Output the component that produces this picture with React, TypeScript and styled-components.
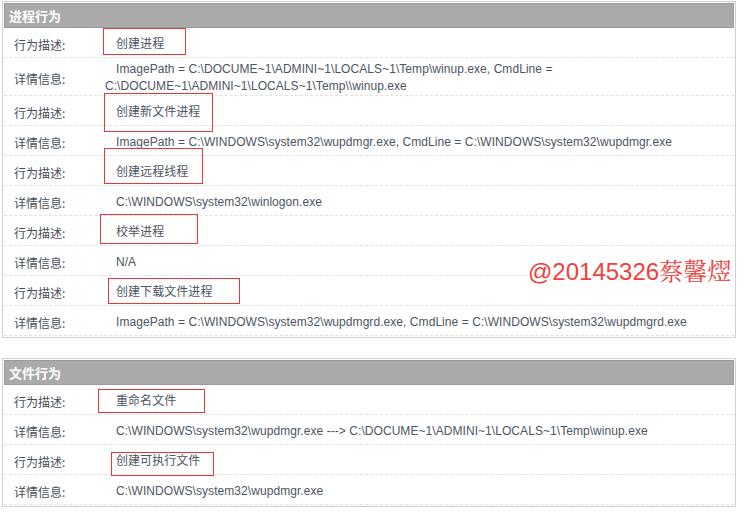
import React from 'react'
import styled, { createGlobalStyle } from 'styled-components'

const GlobalStyle = createGlobalStyle`
    body {
        margin: 0;
        background: #ffffff;
        font-family: "Liberation Sans", Arial, "Noto Sans CJK SC", sans-serif;
        font-size: 12px;
    }
`;

const Page = styled.div`
    position: relative;
    width: 750px;
    height: 518px;
    padding: 1px 0 0 2px;
    box-sizing: border-box;
    display: flex;
    flex-direction: column;
    gap: 20px;
`;

const Panel = styled.section`
    width: 734px;
    box-sizing: border-box;
    border: 1px solid #d0d0d0;
    padding: 1px;
`;

const PanelHeader = styled.h3`
    margin: 0;
    height: 25px;
    box-sizing: border-box;
    border: 1px solid #9a9a9a;
    background: #aaaaaa;
    color: #ffffff;
    font-size: 13px;
    font-weight: bold;
    line-height: 23px;
    padding-left: 4px;
    font-family: "Noto Sans CJK SC", sans-serif;
`;

const Row = styled.div`
    display: grid;
    grid-template-columns: 101px 1fr;
    align-items: center;
    min-height: 30px;
    box-sizing: border-box;
    padding: 3px 0 0;
    border-bottom: 1px dashed #e2e2e2;
    color: #4c5562;
    line-height: 17px;
`;

const Label = styled.div`
    padding-left: 10px;
    font-family: "Noto Sans CJK SC", sans-serif;
    color: #464e58;
`;

const Value = styled.div`
    text-indent: 11px;
    padding-right: 8px;
    letter-spacing: 0.06px;
    font-family: "Liberation Sans", Arial, "Noto Sans CJK SC", sans-serif;
`;

const Annotation = styled.div<{ $x: number; $y: number; $w: number; $h: number }>`
    position: absolute;
    left: ${p => p.$x}px;
    top: ${p => p.$y}px;
    width: ${p => p.$w}px;
    height: ${p => p.$h}px;
    border: 1px solid #e53a3a;
    box-sizing: border-box;
    pointer-events: none;
`;

const Watermark = styled.div`
    position: absolute;
    left: 528px;
    top: 254px;
    color: #f0413c;
    font-size: 24px;
    line-height: 32px;
    white-space: nowrap;
    font-family: "Liberation Sans", Arial, sans-serif;
`;

const SerifName = styled.span`
    font-family: "Noto Serif CJK SC", "Liberation Serif", "Noto Sans CJK SC", serif;
`;

type Entry = { label: string; value: string }

const processRows: Entry[] = [
    { label: '行为描述:', value: '创建进程' },
    { label: '详情信息:', value: 'ImagePath = C:\\DOCUME~1\\ADMINI~1\\LOCALS~1\\Temp\\winup.exe, CmdLine = C:\\DOCUME~1\\ADMINI~1\\LOCALS~1\\Temp\\\\winup.exe' },
    { label: '行为描述:', value: '创建新文件进程' },
    { label: '详情信息:', value: 'ImagePath = C:\\WINDOWS\\system32\\wupdmgr.exe, CmdLine = C:\\WINDOWS\\system32\\wupdmgr.exe' },
    { label: '行为描述:', value: '创建远程线程' },
    { label: '详情信息:', value: 'C:\\WINDOWS\\system32\\winlogon.exe' },
    { label: '行为描述:', value: '校举进程' },
    { label: '详情信息:', value: 'N/A' },
    { label: '行为描述:', value: '创建下载文件进程' },
    { label: '详情信息:', value: 'ImagePath = C:\\WINDOWS\\system32\\wupdmgrd.exe, CmdLine = C:\\WINDOWS\\system32\\wupdmgrd.exe' },
]

const fileRows: Entry[] = [
    { label: '行为描述:', value: '重命名文件' },
    { label: '详情信息:', value: 'C:\\WINDOWS\\system32\\wupdmgr.exe ---> C:\\DOCUME~1\\ADMINI~1\\LOCALS~1\\Temp\\winup.exe' },
    { label: '行为描述:', value: '创建可执行文件' },
    { label: '详情信息:', value: 'C:\\WINDOWS\\system32\\wupdmgr.exe' },
]

// red boxes drawn over the screenshot by hand
const marks = [
    { x: 103, y: 28, w: 83, h: 27 },
    { x: 104, y: 93, w: 109, h: 39 },
    { x: 104, y: 148, w: 99, h: 36 },
    { x: 100, y: 214, w: 98, h: 30 },
    { x: 108, y: 278, w: 132, h: 26 },
    { x: 98, y: 389, w: 107, h: 24 },
    { x: 111, y: 452, w: 103, h: 24 },
]

const BehaviorPanel = ({ title, rows }: { title: string; rows: Entry[] }) => (
    <Panel>
        <PanelHeader>{title}</PanelHeader>
        {rows.map((r, i) => (
            <Row key={i}>
                <Label>{r.label}</Label>
                <Value>{r.value}</Value>
            </Row>
        ))}
    </Panel>
)

export default function App() {
    return (
        <Page>
            <GlobalStyle />
            <BehaviorPanel title="进程行为" rows={processRows} />
            <BehaviorPanel title="文件行为" rows={fileRows} />
            {marks.map((m, i) => (
                <Annotation key={i} $x={m.x} $y={m.y} $w={m.w} $h={m.h} />
            ))}
            <Watermark>@20145326<SerifName>蔡馨熤</SerifName></Watermark>
        </Page>
    )
}
